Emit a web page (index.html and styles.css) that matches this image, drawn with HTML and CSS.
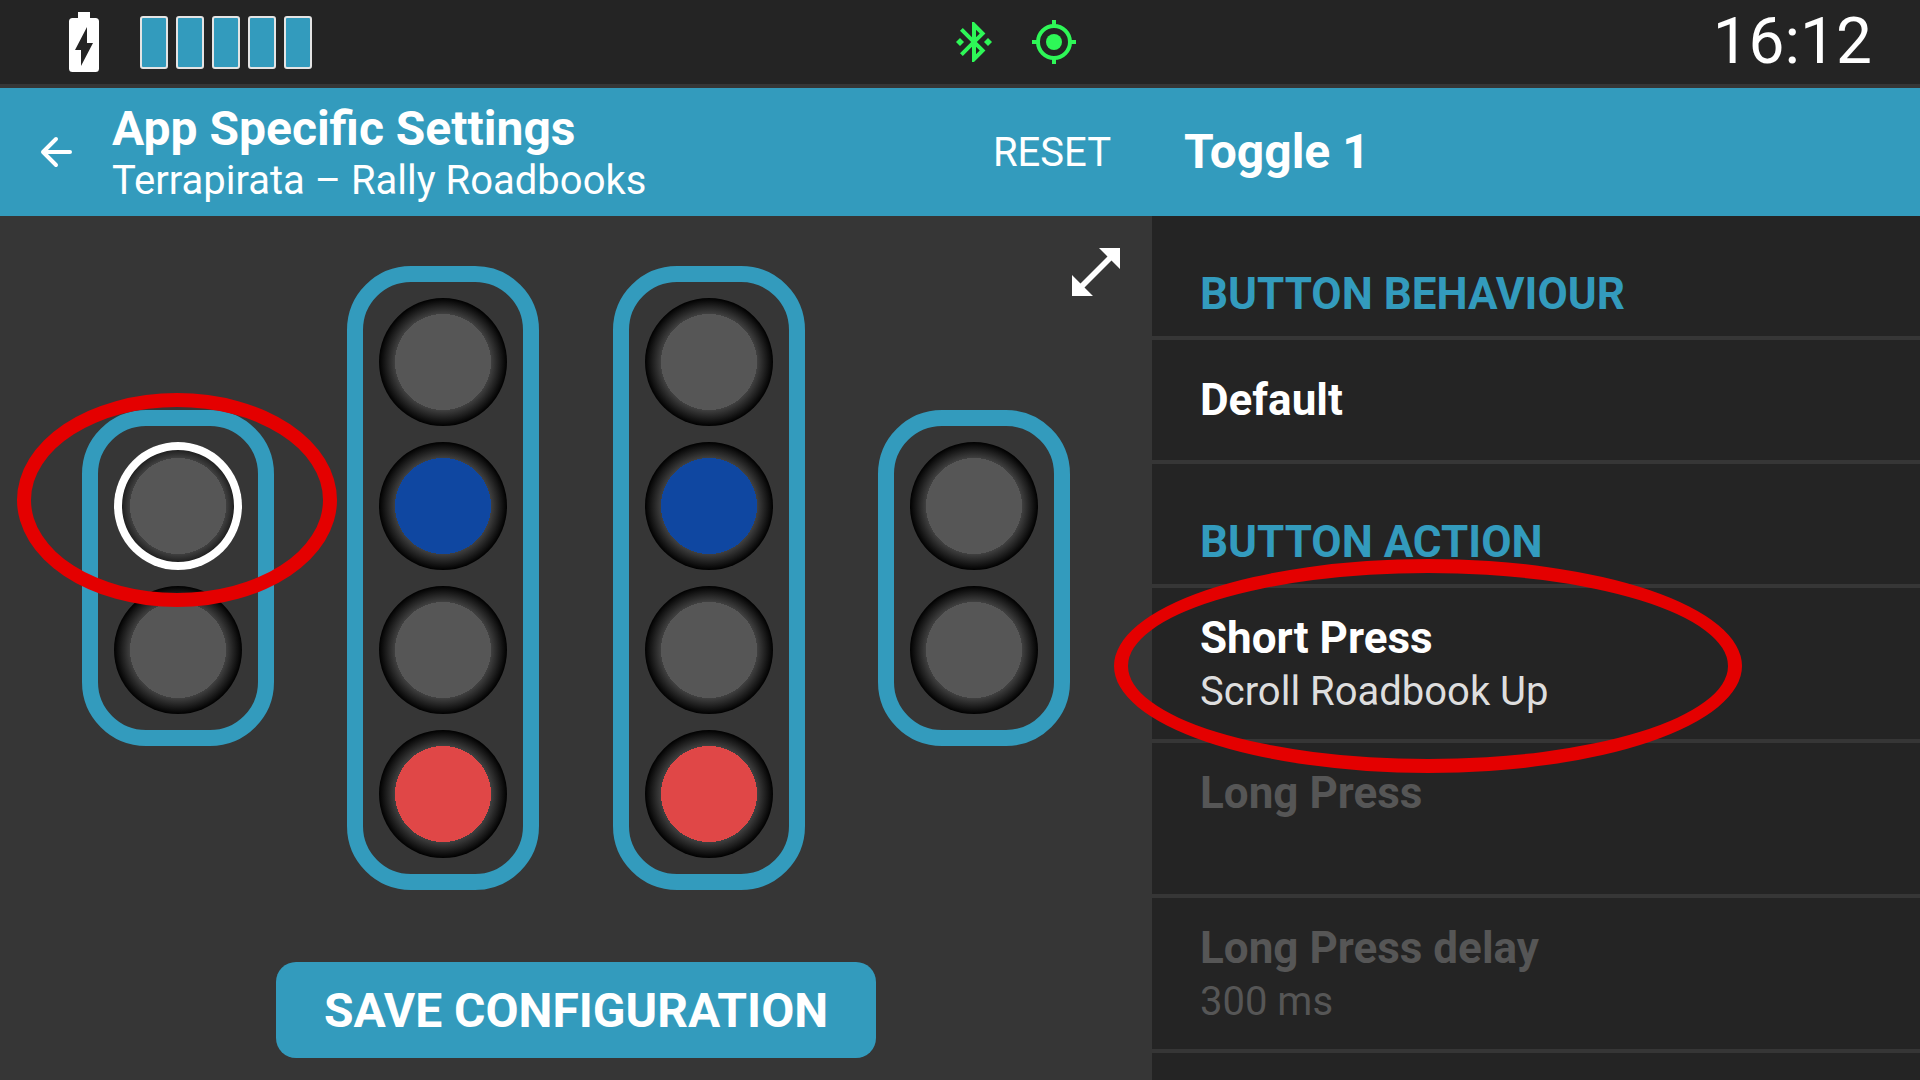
FILE: index.html
```html
<!DOCTYPE html>
<html lang="en">
<head>
  <meta charset="UTF-8" />
  <meta name="viewport" content="width=device-width, initial-scale=1.0" />
  <title>App Specific Settings</title>
  <link rel="stylesheet" href="styles.css">
</head>
<body>
  <header class="status">
    <div class="battery">
      <svg class="battery-icon" viewBox="0 0 30 60" width="30" height="60" aria-hidden="true">
        <path fill="#fff" fill-rule="evenodd" d="M9 0h12v6h5.500a3.500 3.500 0 0 1 3.500 3.500v47a3.500 3.500 0 0 1-3.500 3.500h-23A3.500 3.500 0 0 1 0 56.500v-47A3.500 3.500 0 0 1 3.500 6H9zM18 15L6 38h6v16l12-23h-6z"/>
      </svg>
      <div class="cells">
        <span class="cell"></span>
        <span class="cell"></span>
        <span class="cell"></span>
        <span class="cell"></span>
        <span class="cell"></span>
      </div>
    </div>
    <div class="signals">
      <svg viewBox="0 0 24 24" width="48" height="48" fill="#2ef757" aria-label="Bluetooth connected">
        <path d="M7 12l-2-2-2 2 2 2 2-2zm10.710-4.290L12 2h-1v7.590L6.410 5 5 6.410 10.590 12 5 17.590 6.410 19 11 14.410V22h1l5.710-5.710-4.300-4.290 4.300-4.290zM13 5.830l1.880 1.880L13 9.590V5.830zm1.880 10.460L13 18.170v-3.760l1.880 1.880zM19 10l-2 2 2 2 2-2-2-2z"/>
      </svg>
      <svg viewBox="0 0 24 24" width="48" height="48" aria-label="GPS fixed">
        <circle cx="12" cy="12" r="4" fill="#2ef757"/>
        <circle cx="12" cy="12" r="8" fill="none" stroke="#2ef757" stroke-width="2"/>
        <path stroke="#2ef757" stroke-width="2" d="M12 1v3M12 20v3M1 12h3M20 12h3"/>
      </svg>
    </div>
    <time class="clock">16:12</time>
  </header>

  <div class="toolbar">
    <div class="toolbar-main">
      <button class="back" aria-label="Back">
        <svg viewBox="0 0 32 32" width="32" height="32" fill="none" stroke="#fff" stroke-width="4" stroke-linecap="round" stroke-linejoin="round" aria-hidden="true">
          <path d="M30 16H3M16 3L3 16l13 13"/>
        </svg>
      </button>
      <div class="titles">
        <h1>App Specific Settings</h1>
        <p>Terrapirata – Rally Roadbooks</p>
      </div>
      <button class="reset">RESET</button>
    </div>
    <h2 class="toolbar-side">Toggle 1</h2>
  </div>

  <div class="content">
    <main class="layout">
      <button class="expand" aria-label="Expand">
        <svg viewBox="0 0 48 48" width="48" height="48" aria-hidden="true">
          <path fill="#fff" d="M27 0h21v21l-8.500-8.500L12.500 39.500l8.500 8.500H0V27l8.500 8.500L35.500 8.500z"/>
        </svg>
      </button>

      <div class="groups">
        <div class="group">
          <button class="key selected" aria-label="Toggle 1"></button>
          <button class="key" aria-label="Toggle 2"></button>
          <div class="mark mark-key"></div>
        </div>
        <div class="group">
          <button class="key" aria-label="Button 1"></button>
          <button class="key blue" aria-label="Button 2"></button>
          <button class="key" aria-label="Button 3"></button>
          <button class="key red" aria-label="Button 4"></button>
        </div>
        <div class="group">
          <button class="key" aria-label="Button 5"></button>
          <button class="key blue" aria-label="Button 6"></button>
          <button class="key" aria-label="Button 7"></button>
          <button class="key red" aria-label="Button 8"></button>
        </div>
        <div class="group">
          <button class="key" aria-label="Toggle 3"></button>
          <button class="key" aria-label="Toggle 4"></button>
        </div>
      </div>

      <button class="save">SAVE CONFIGURATION</button>
    </main>

    <aside class="settings">
      <h3 class="section">BUTTON BEHAVIOUR</h3>
      <button class="row single"><strong>Default</strong></button>
      <h3 class="section">BUTTON ACTION</h3>
      <div class="marked">
        <button class="row">
          <strong>Short Press</strong>
          <span>Scroll Roadbook Up</span>
        </button>
        <div class="mark mark-row"></div>
      </div>
      <button class="row" disabled>
        <strong>Long Press</strong>
      </button>
      <button class="row" disabled>
        <strong>Long Press delay</strong>
        <span>300 ms</span>
      </button>
    </aside>
  </div>
</body>
</html>
```
FILE: styles.css
```css
* {
  box-sizing: border-box;
}
body {
  margin: 0;
  height: 100vh;
  display: flex;
  flex-direction: column;
  overflow: hidden;
  background: #363636;
  color: #fff;
  font-family: Roboto, sans-serif;
  font-size: 40px;
  line-height: 47px;
}
h1, h2, h3, p {
  margin: 0;
}
button {
  border: none;
  padding: 0;
  background: none;
  color: inherit;
  font: inherit;
  cursor: pointer;
}
svg {
  display: block;
}

/* status bar */
.status {
  flex: none;
  height: 88px;
  padding: 0 48px 0 69px;
  display: flex;
  align-items: center;
  justify-content: space-between;
  background: #242424;
  border-bottom: 4px solid #363636;
}
.battery {
  display: flex;
  align-items: center;
  gap: 41px;
}
.cells {
  display: flex;
  gap: 8px;
}
.cell {
  width: 28px;
  height: 53px;
  background: #339bbd;
  border: 2px solid #e4e4e4;
  border-radius: 3px;
}
.signals {
  display: flex;
  gap: 32px;
  padding-left: 4px;
}
.clock {
  font-size: 64px;
  line-height: 76px;
}

/* toolbar */
.toolbar {
  flex: none;
  height: 128px;
  display: grid;
  grid-template-columns: 3fr 2fr;
  align-items: center;
  background: #339bbd;
}
.toolbar-main {
  display: flex;
  align-items: center;
  padding: 0 41px 0 40px;
}
.back {
  width: 72px;
}
.titles {
  flex: 1;
}
.titles h1, .toolbar-side {
  font-size: 48px;
  line-height: 56px;
}
.toolbar-side {
  padding-left: 32px;
}

.content {
  flex: 1;
  min-height: 0;
  display: grid;
  grid-template-columns: 3fr 2fr;
}

/* button layout */
.layout {
  position: relative;
  display: flex;
  flex-direction: column;
  align-items: center;
  justify-content: space-between;
  padding: 50px 8px 22px;
}
.expand {
  position: absolute;
  top: 32px;
  right: 32px;
}
.groups {
  width: 100%;
  display: flex;
  align-items: center;
  justify-content: space-evenly;
}
.group {
  position: relative;
  display: flex;
  flex-direction: column;
  gap: 16px;
  padding: 16px;
  border: 16px solid #339bbd;
  border-radius: 64px;
}
.key {
  --core: #565656;
  width: 128px;
  height: 128px;
  border-radius: 50%;
  background: radial-gradient(circle, var(--core) 48px, #404040 48px, #000 64px);
}
.key.blue {
  --core: #0f47a1;
}
.key.red {
  --core: #e04747;
}
.key.selected {
  box-shadow: inset 0 0 0 8px #fff;
}
.save {
  height: 96px;
  padding: 0 48px;
  border-radius: 20px;
  background: #339bbd;
  font-size: 48px;
  font-weight: bold;
}

/* settings list */
.settings {
  background: #242424;
}
.section, .row {
  border-bottom: 4px solid #363636;
  padding: 24px 48px;
}
.section, .row strong {
  font-size: 44px;
  line-height: 52px;
  font-weight: bold;
}
.section {
  padding: 52px 48px 16px;
  color: #339bbd;
}
.row {
  width: 100%;
  min-height: 155px;
  display: flex;
  flex-direction: column;
  gap: 4px;
  text-align: left;
}
.row.single {
  min-height: 124px;
  justify-content: center;
}
.row span {
  color: #dedede;
}
.row:disabled, .row:disabled span {
  color: #565656;
}

/* red highlight rings */
.marked {
  position: relative;
}
.mark {
  position: absolute;
  border: 14px solid #e40000;
  border-radius: 50%;
  pointer-events: none;
}
.mark-key {
  top: -33px;
  left: -81px;
  width: 320px;
  height: 214px;
}
.mark-row {
  top: -29px;
  left: -38px;
  width: 628px;
  height: 214px;
  z-index: 1;
}
```
